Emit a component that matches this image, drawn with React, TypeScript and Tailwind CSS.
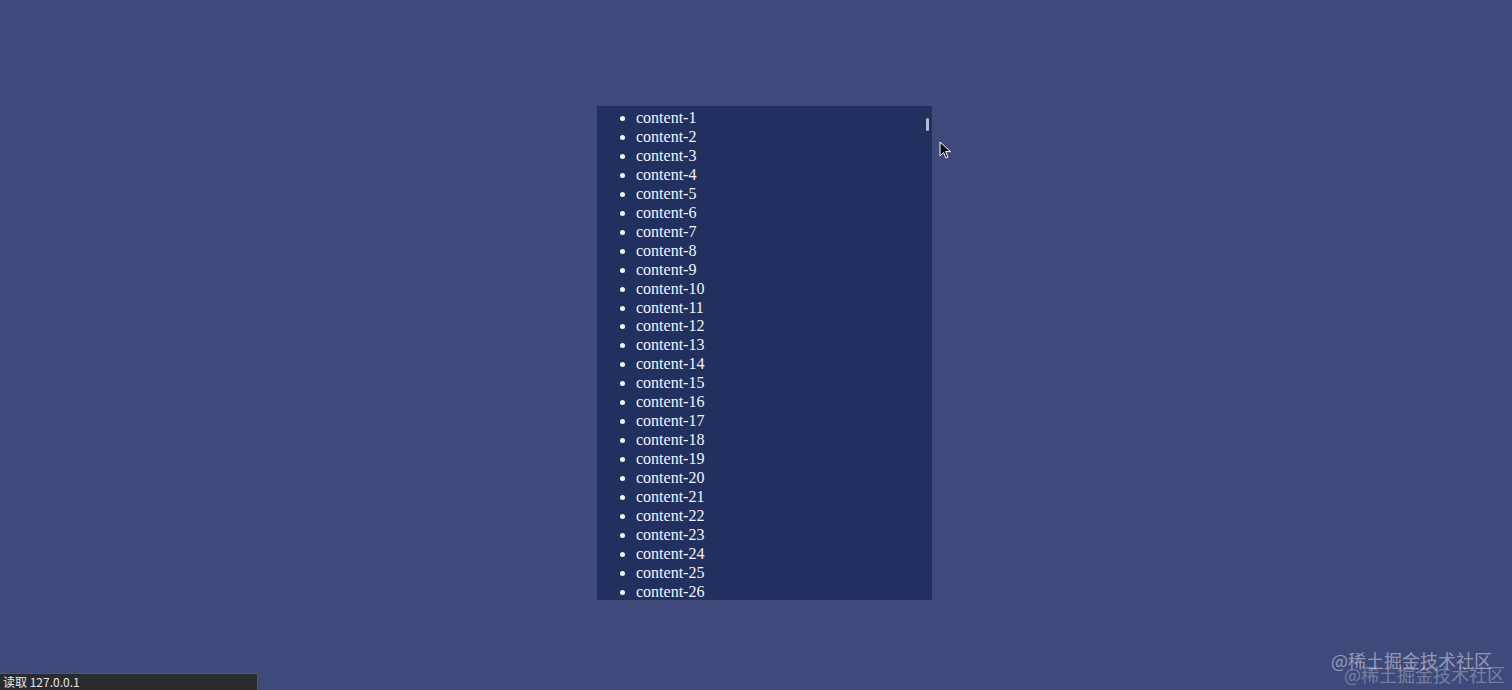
import React from 'react';

const ITEMS = Array.from({ length: 26 }, (_, i) => `content-${i + 1}`);

export default function App() {
  return (
    <div className="relative w-[1512px] h-[690px] overflow-hidden bg-[#3f4a7a]">
      {/* scroll panel */}
      <div className="absolute left-[597px] top-[106px] w-[335px] h-[494px] bg-[#21305e] overflow-hidden">
        <ul
          className="list-disc pl-[39px] pt-[3px] text-[16px] leading-[18.96px] text-[#f4f5fa]"
          style={{ fontFamily: '"Liberation Serif", "Times New Roman", serif' }}
        >
          {ITEMS.map((t) => (
            <li key={t}>{t}</li>
          ))}
        </ul>
        {/* thin scrollbar thumb */}
        <div className="absolute right-[3px] top-[12px] w-[3px] h-[13px] rounded-sm bg-[#b7bdd4]" />
      </div>

      {/* mouse cursor */}
      <svg className="absolute left-[939px] top-[141px]" width="14" height="18" viewBox="0 0 14 18">
        <path d="M1 1 L1 15 L4.5 11.5 L7 17 L9 16 L6.6 10.6 L11.5 10.6 Z" fill="#111" stroke="#fff" strokeWidth="1" strokeLinejoin="round" />
      </svg>

      {/* status bar */}
      <div
        className="absolute left-0 bottom-0 w-[258px] h-[17px] bg-[#2a2b2e] border-t border-r border-[#55575f] text-[12px] leading-[16px] text-[#e6e6e6] pl-[3px]"
        style={{ fontFamily: '"Noto Sans CJK SC", "Liberation Sans", sans-serif' }}
      >
        读取 127.0.0.1
      </div>

      {/* watermark */}
      <div
        className="absolute right-[20px] bottom-[20px] text-[18px] leading-[20px] text-white/45"
        style={{ fontFamily: '"Noto Sans CJK SC", sans-serif' }}
      >
        @稀土掘金技术社区
      </div>
      <div
        className="absolute right-[7px] bottom-[6px] text-[18px] leading-[20px] text-white/30"
        style={{ fontFamily: '"Noto Sans CJK SC", sans-serif' }}
      >
        @稀土掘金技术社区
      </div>
    </div>
  );
}
